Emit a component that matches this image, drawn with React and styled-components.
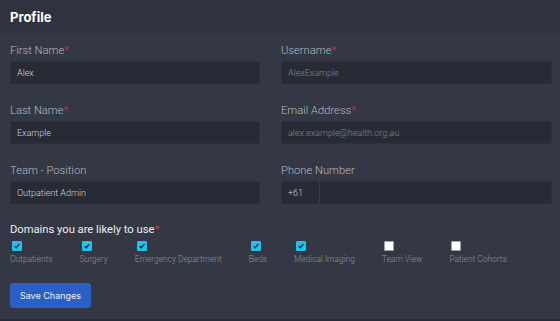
import React from 'react'
import styled, { createGlobalStyle } from 'styled-components'

const GlobalStyle = createGlobalStyle`
  html, body {
    margin: 0;
    padding: 0;
    background: #343845;
    font-family: Roboto, "Noto Sans", sans-serif;
  }
  * { box-sizing: border-box; }
`

const Page = styled.div`
  min-height: 100vh;
  background: #343845;
  border-bottom: 2px solid #262a34;
`

const Header = styled.div`
  height: 33px;
  background: #2f333f;
  display: flex;
  align-items: center;
  padding: 0 10px;
  color: #ffffff;
  font-family: Inter, Roboto, sans-serif;
  font-size: 13px;
  font-weight: 700;
`

const Body = styled.div`
  padding: 11px 10px 0 10px;
`

const FormGrid = styled.div`
  display: grid;
  grid-template-columns: 250px 271px;
  column-gap: 21px;
  row-gap: 20px;
`

const Field = styled.div`
  display: flex;
  flex-direction: column;
`

const Label = styled.label`
  font-size: 11.2px;
  line-height: 14px;
  color: ${p => (p.bright ? '#eceef1' : '#b4b8c0')};
  margin-bottom: 3px;
  font-weight: ${p => (p.bright ? 400 : 300)};
`

const Star = styled.span`
  color: #d0393f;
`

const Input = styled.input`
  height: 23px;
  width: 100%;
  background: #272b36;
  border: 1px solid #2d313c;
  border-radius: 2px;
  padding: 0 6px;
  font-family: inherit;
  font-size: 9px;
  font-weight: 300;
  color: #d2d5da;
  outline: none;
  &::placeholder { color: #80858f; }
`

const PhoneRow = styled.div`
  display: flex;
  height: 23px;
  background: #272b36;
  border: 1px solid #2d313c;
  border-radius: 2px;
`

const Prefix = styled.div`
  width: 38px;
  display: flex;
  align-items: center;
  padding-left: 6px;
  font-size: 9px;
  font-weight: 300;
  color: #d2d5da;
  border-right: 1px solid #3a3e4a;
`

const PhoneInput = styled.input`
  flex: 1;
  background: transparent;
  border: none;
  outline: none;
  font-family: inherit;
  color: #d2d5da;
`

const Domains = styled.div`
  margin-top: 14px;
`

const DomainList = styled.div`
  display: flex;
  gap: 27px;
  margin-top: 4px;
`

const Domain = styled.div`
  display: flex;
  flex-direction: column;
  align-items: flex-start;
`

const Box = styled.span`
  width: 10px;
  height: 10px;
  border-radius: 1px;
  margin-left: 2px;
  display: flex;
  align-items: center;
  justify-content: center;
  background: ${p => (p.checked ? '#1ec4ee' : '#ffffff')};
  border: 1px solid ${p => (p.checked ? '#1ec4ee' : '#9ca0a8')};
`

const DomainText = styled.span`
  font-size: 8.4px;
  font-weight: 300;
  color: #8d929c;
  margin-top: 2px;
  line-height: 12px;
  white-space: nowrap;
`

const SaveButton = styled.button`
  margin-top: 18px;
  width: 81px;
  height: 25px;
  background: #2a5fc6;
  border: none;
  border-radius: 3px;
  color: #eef2fa;
  font-family: Inter, Roboto, sans-serif;
  font-size: 9px;
  font-weight: 400;
  padding: 0;
`

const Check = () => (
  <svg width="8" height="8" viewBox="0 0 8 8">
    <path d="M1.6 4.3 L3.2 5.9 L6.4 2" fill="none" stroke="#1b2330" strokeWidth="1.3" />
  </svg>
)

const domains = [
  ['Outpatients', true],
  ['Surgery', true],
  ['Emergency Department', true],
  ['Beds', true],
  ['Medical Imaging', true],
  ['Team View', false],
  ['Patient Cohorts', false],
]

export default function App() {
  return (
    <Page>
      <GlobalStyle />
      <Header>Profile</Header>
      <Body>
        <FormGrid>
          <Field>
            <Label>First Name<Star>*</Star></Label>
            <Input defaultValue="Alex" />
          </Field>
          <Field>
            <Label>Username<Star>*</Star></Label>
            <Input placeholder="AlexExample" />
          </Field>
          <Field>
            <Label>Last Name<Star>*</Star></Label>
            <Input defaultValue="Example" />
          </Field>
          <Field>
            <Label>Email Address<Star>*</Star></Label>
            <Input placeholder="alex.example@health.org.au" />
          </Field>
          <Field>
            <Label>Team - Position</Label>
            <Input defaultValue="Outpatient Admin" />
          </Field>
          <Field>
            <Label>Phone Number</Label>
            <PhoneRow>
              <Prefix>+61</Prefix>
              <PhoneInput />
            </PhoneRow>
          </Field>
        </FormGrid>
        <Domains>
          <Label bright>Domains you are likely to use<Star>*</Star></Label>
          <DomainList>
            {domains.map(([name, on]) => (
              <Domain key={name}>
                <Box checked={on}>{on && <Check />}</Box>
                <DomainText>{name}</DomainText>
              </Domain>
            ))}
          </DomainList>
        </Domains>
        <SaveButton>Save Changes</SaveButton>
      </Body>
    </Page>
  )
}
